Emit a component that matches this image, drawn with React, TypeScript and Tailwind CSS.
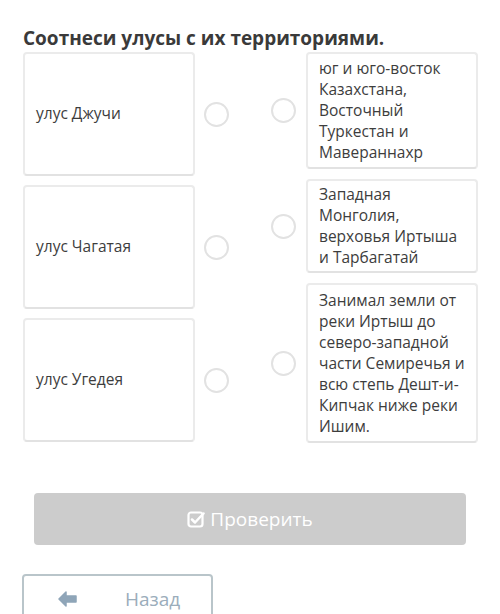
import React from "react";

const font = { fontFamily: '"Open Sans", "Noto Sans", sans-serif' };

function Circle() {
  return <div className="w-[25px] h-[25px] shrink-0 rounded-full border-2 border-[#e2e2e2] bg-white" />;
}

const left = ["улус Джучи", "улус Чагатая", "улус Угедея"];
const right: { lines: string[]; h: string }[] = [
  { lines: ["юг и юго-восток", "Казахстана,", "Восточный", "Туркестан и", "Мавераннахр"], h: "h-[117px]" },
  { lines: ["Западная", "Монголия,", "верховья Иртыша", "и Тарбагатай"], h: "h-[94px]" },
  {
    lines: ["Занимал земли от", "реки Иртыш до", "северо-западной", "части Семиречья и", "всю степь Дешт-и-", "Кипчак ниже реки", "Ишим."],
    h: "h-[160px]",
  },
];

export default function App() {
  return (
    <div className="w-[500px] h-[614px] overflow-hidden bg-white text-[#3d3d3d]" style={font}>
      <h1 className="pl-[23px] pt-[24px] text-[19px] leading-[28px] font-bold text-[#3a3a3a]">
        Соотнеси улусы с их территориями.
      </h1>
      <div className="flex pl-[23px] pr-[22px] justify-between">
        <div className="flex flex-col gap-[9px]">
          {left.map((t) => (
            <div key={t} className="flex items-center gap-[9px]">
              <div className="w-[172px] h-[124px] flex items-center px-[11px] rounded-[4px] border-2 border-[#ebebeb] border-b-[#e2e2e2] text-[15.5px]">
                {t}
              </div>
              <Circle />
            </div>
          ))}
        </div>
        <div className="flex flex-col gap-[10px]">
          {right.map((r, i) => (
            <div key={i} className="flex items-center gap-[10px]">
              <Circle />
              <div className={`w-[172px] ${r.h} flex flex-col justify-center px-[11px] rounded-[4px] border-2 border-[#ebebeb] border-b-[#e2e2e2] text-[15.5px] leading-[21px]`}>
                {r.lines.map((l) => (
                  <div key={l} className="whitespace-nowrap">{l}</div>
                ))}
              </div>
            </div>
          ))}
        </div>
      </div>
      <div className="pl-[34px] pr-[34px] pt-[50px]">
        <div className="h-[52px] rounded-[4px] bg-[#cccccc] flex items-center justify-center gap-[5px] text-white text-[19px]">
          <svg width="18" height="18" viewBox="0 0 18 18" fill="none">
            <rect x="1.5" y="2.5" width="14" height="14" rx="2.5" stroke="white" strokeWidth="2.2" />
            <path d="M5 9.5 L8 12.5 L16.5 3.5" stroke="white" strokeWidth="2.5" strokeLinecap="round" strokeLinejoin="round" />
          </svg>
          <span>Проверить</span>
        </div>
      </div>
      <div className="pl-[22px] pt-[29px]">
        <div className="w-[191px] h-[50px] rounded-[4px] border-2 border-[#b9c5ca] flex items-center text-[#9badbb] text-[19px]">
          <svg width="19" height="16" viewBox="0 0 19 16" className="ml-[34px]">
            <path d="M8 1 L1 8 L8 15 L8 11 L18 11 L18 5 L8 5 Z" fill="#8fa5b8" stroke="#8fa5b8" strokeWidth="1.5" strokeLinejoin="round" />
          </svg>
          <span className="ml-[48px]">Назад</span>
        </div>
      </div>
    </div>
  );
}
